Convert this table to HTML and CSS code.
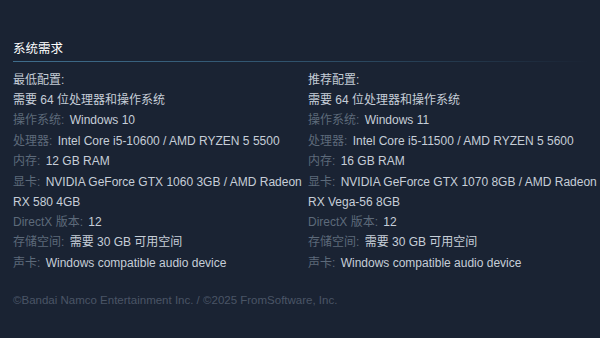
FILE: index.html
```html
<!DOCTYPE html>
<html lang="zh-CN">
<head>
<meta charset="utf-8">
<link rel="stylesheet" href="styles.css">
</head>
<body>
<div class="page">
  <div class="sysreq">
    <h2 class="title">系统需求</h2>
    <div class="cols">
      <div class="col">
        <div class="col-head">最低配置:</div>
        <ul class="reqs">
          <li>需要 64 位处理器和操作系统</li>
          <li><span class="lbl">操作系统:</span> Windows 10</li>
          <li><span class="lbl">处理器:</span> Intel Core i5-10600 / AMD RYZEN 5 5500</li>
          <li><span class="lbl">内存:</span> 12 GB RAM</li>
          <li><span class="lbl">显卡:</span> NVIDIA GeForce GTX 1060 3GB / AMD Radeon RX 580 4GB</li>
          <li><span class="lbl">DirectX 版本:</span> 12</li>
          <li><span class="lbl">存储空间:</span> 需要 30 GB 可用空间</li>
          <li><span class="lbl">声卡:</span> Windows compatible audio device</li>
        </ul>
      </div>
      <div class="col">
        <div class="col-head">推荐配置:</div>
        <ul class="reqs">
          <li>需要 64 位处理器和操作系统</li>
          <li><span class="lbl">操作系统:</span> Windows 11</li>
          <li><span class="lbl">处理器:</span> Intel Core i5-11500 / AMD RYZEN 5 5600</li>
          <li><span class="lbl">内存:</span> 16 GB RAM</li>
          <li><span class="lbl">显卡:</span> NVIDIA GeForce GTX 1070 8GB / AMD Radeon RX Vega-56 8GB</li>
          <li><span class="lbl">DirectX 版本:</span> 12</li>
          <li><span class="lbl">存储空间:</span> 需要 30 GB 可用空间</li>
          <li><span class="lbl">声卡:</span> Windows compatible audio device</li>
        </ul>
      </div>
    </div>
    <p class="legal">©Bandai Namco Entertainment Inc. / ©2025 FromSoftware, Inc.</p>
  </div>
</div>
</body>
</html>
```
FILE: styles.css
```css
html, body {
  margin: 0;
  padding: 0;
  background: #1a2333;
}
.page {
  width: 600px;
  height: 338px;
  background: #1a2333;
  font-family: "Liberation Sans", "Noto Sans CJK SC", sans-serif;
  box-sizing: border-box;
  padding: 39px 0 0 13px;
  overflow: hidden;
}
.title {
  margin: 0 10px 0 0;
  font-size: 12.5px;
  font-weight: normal;
  color: #ffffff;
  line-height: 20px;
  padding-bottom: 0;
}
.sysreq .title::after {
  content: "";
  display: block;
  height: 1px;
  margin-top: 2px;
  background: linear-gradient(to right, #3f6d8c 0%, #2f516b 50%, rgba(47, 81, 107, 0) 100%);
}
.cols {
  display: grid;
  grid-template-columns: 293px 292px;
  column-gap: 2px;
  margin-top: 8px;
}
.col-head {
  font-size: 12px;
  color: #c3cbd5;
  line-height: 20px;
}
.reqs {
  list-style: none;
  margin: 0;
  padding: 0;
}
.reqs li {
  font-size: 12px;
  line-height: 20px;
  color: #c6ced8;
  margin-bottom: 0.4px;
}
.lbl {
  color: #5d6a7a;
  margin-right: 2px;
}
.legal {
  margin: 19px 0 0;
  font-size: 11.5px;
  color: #4a5566;
  line-height: 16px;
}
```
